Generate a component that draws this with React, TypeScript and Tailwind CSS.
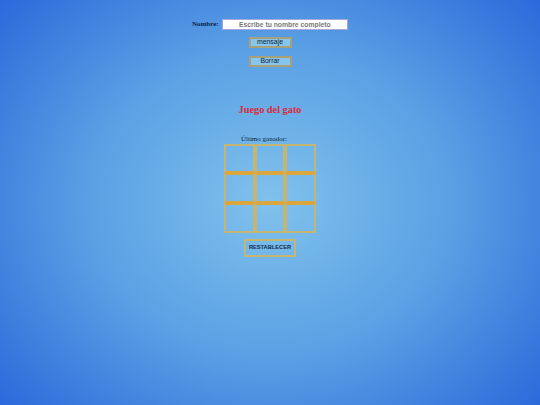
import React from "react";

const serif = "font-['Liberation_Serif','Times_New_Roman',serif]";
const sans = "font-['Liberation_Sans',Arial,sans-serif]";

function Cell({ top, bottom }: { top: "k" | "o"; bottom: "k" | "o" }) {
  return (
    <div
      className={
        "w-[30.5px] h-[29.7px] border-2 border-[#c4b672] " +
        (top === "o" ? "border-t-[#dca63e] " : "") +
        (bottom === "o" ? "border-b-[#dca63e]" : "")
      }
    />
  );
}

export default function App() {
  const rows: Array<["k" | "o", "k" | "o"]> = [
    ["k", "o"],
    ["o", "o"],
    ["o", "k"],
  ];
  return (
    <div className="w-full h-[405px] overflow-hidden bg-[radial-gradient(ellipse_75%_85%_at_50%_50%,#80c2ec_0%,#5aa0e4_45%,#3574dc_80%,#1f5ddc_100%)]">
      <div className="flex flex-col items-center pt-[18.5px]">
        <div className="flex items-center gap-[3px]">
          <span className={`${serif} text-[7px] font-bold text-[#0b1d45] leading-none`}>
            Nombre:
          </span>
          <input
            placeholder="Escribe tu nombre completo"
            className={`${sans} w-[126.5px] h-[11px] bg-white border border-[#a9a8dc] text-center text-[6.8px] font-bold text-[#555] placeholder:text-[#7a7a7a] outline-none p-0`}
          />
        </div>
        <button
          className={`${sans} mt-[7.5px] w-[43px] h-[11px] bg-[#86c6ec] border-2 border-[#a8a07a] text-[6.9px] text-[#0f1d33] leading-none flex items-center justify-center`}
        >
          mensaje
        </button>
        <button
          className={`${sans} mt-[7.5px] w-[43px] h-[11px] bg-[#86c6ec] border-2 border-[#a8a07a] text-[6.9px] text-[#0f1d33] leading-none flex items-center justify-center`}
        >
          Borrar
        </button>
        <h2 className={`${serif} mt-[38px] text-[10.3px] font-bold text-[#dc2a3c] leading-none`}>
          Juego del gato
        </h2>
        <p className={`${serif} mt-[21px] text-[7px] text-[#0f1f3c] leading-none pr-[12px]`}>
          Último ganador:
        </p>
        <div className="mt-[1px] flex flex-col">
          {rows.map(([t, b], i) => (
            <div key={i} className="flex">
              <Cell top={t} bottom={b} />
              <Cell top={t} bottom={b} />
              <Cell top={t} bottom={b} />
            </div>
          ))}
        </div>
        <button
          className={`${sans} mt-[6.5px] w-[51.6px] h-[17.7px] border-2 border-[#c4b672] text-[5.7px] font-bold text-[#16294e] leading-none flex items-center justify-center`}
        >
          RESTABLECER
        </button>
      </div>
    </div>
  );
}
